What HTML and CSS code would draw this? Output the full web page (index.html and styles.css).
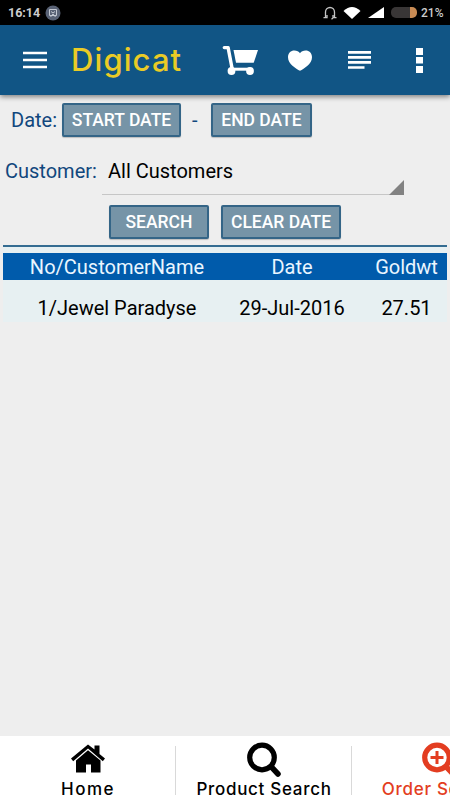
FILE: index.html
```html
<!DOCTYPE html>
<html lang="en">
<head>
  <meta charset="UTF-8" />
  <meta name="viewport" content="width=device-width, initial-scale=1.0" />
  <title>Digicat</title>
  <link rel="stylesheet" href="styles.css">
</head>
<body>
  <div class="status">
    <span class="clock">16:14</span>
    <svg class="badge" width="16" height="16" viewBox="0 0 16 16">
      <circle cx="8" cy="8" r="7.5" fill="#596275"/>
      <path d="M4.5 4.5h7v6h-7zM5.5 12l2.5-3 2.5 3M6 6.5l2 1.5 2-1.5" fill="none" stroke="#c3c8d2"/>
    </svg>
    <svg class="headset" width="14" height="14" viewBox="0 0 14 14">
      <path d="M2.5 11.500V6a4.500 4.500 0 0 1 9 0v5.500M.5 11.700h3.500V9M13.500 11.700H10V9M10 12l-1.500 1.200" fill="none" stroke="#c4c4c4" stroke-width="1.300"/>
    </svg>
    <svg class="wifi" width="18" height="12" viewBox="0 0 18 12"><path d="M.5 4Q9-4 17.500 4L9 12z" fill="#fff"/></svg>
    <svg class="signal" width="16" height="11" viewBox="0 0 16 11"><path d="M16 0v11H0z" fill="#fff"/></svg>
    <span class="battery"></span>
    <span class="percent">21%</span>
  </div>

  <header class="toolbar">
    <svg class="menu" width="24" height="18" viewBox="0 0 24 18"><path d="M0 2h24M0 9h24M0 16h24" stroke="#fff" stroke-width="2.600"/></svg>
    <h1>Digicat</h1>
    <svg class="cart" width="36" height="30" viewBox="0 0 36 30">
      <path d="M2.300 2.600h3.800L10.300 24.500" fill="none" stroke="#fff" stroke-width="3.400" stroke-linecap="round" stroke-linejoin="round"/>
      <path d="M9 24.200h19" stroke="#fff" stroke-width="3"/>
      <path d="M11.500 5H36l-4.300 12.800H14z" fill="#fff"/>
      <circle cx="9.500" cy="26" r="3.900" fill="#fff"/><circle cx="28" cy="26" r="3.900" fill="#fff"/>
    </svg>
    <svg class="heart" width="24" height="21" viewBox="0 0 24 21"><path d="M12 20.800C8 18.500 0 14 0 7.200 0 3.200 2.800.5 6.400.5 8.800.5 10.900 1.500 12 3.200 13.100 1.500 15.200.5 17.600.5 21.200.5 24 3.200 24 7.200c0 6.800-8 11.300-12 13.600z" fill="#fff"/></svg>
    <svg class="lines" width="23" height="18" viewBox="0 0 23 18"><path d="M0 1.400h23M0 6.400h23M0 11.400h23M0 16.500h16.500" stroke="#fff" stroke-width="2.600"/></svg>
    <svg class="more" width="7" height="25" viewBox="0 0 7 25"><path d="M0 0h7v7H0zM0 9h7v6.600H0zM0 18h7v7H0z" fill="#fff"/></svg>
  </header>

  <main>
    <div class="row dates">
      <span class="label date-label">Date:</span>
      <button class="start">START DATE</button>
      <span class="dash">-</span>
      <button class="end">END DATE</button>
    </div>
    <div class="row customer">
      <span class="label customer-label">Customer:</span>
      <div class="spinner">
        <span>All Customers</span>
        <svg width="15" height="15" viewBox="0 0 15 15"><path d="M15 0v15H0z" fill="#828282"/></svg>
      </div>
    </div>
    <div class="row actions">
      <button class="search">SEARCH</button>
      <button class="clear">CLEAR DATE</button>
    </div>
    <div class="orders">
      <div class="order head">
        <span>No/CustomerName</span><span>Date</span><span>Goldwt</span>
      </div>
      <div class="order">
        <span>1/Jewel Paradyse</span><span>29-Jul-2016</span><span>27.51</span>
      </div>
    </div>
  </main>

  <nav class="tabs">
    <div class="tab">
      <svg width="34" height="35" viewBox="0 0 34 35">
        <path d="M0 16.500 17 2.500l6.500 5V3.500h5v8.500L34 16.500l-2.200 2.700L17 6.500 2.200 19.200z"/>
        <path d="M5 18.500 17 8.300l12.500 10.200V30.500H20v-8h-5v8H5z"/>
      </svg>
      <span class="home-label">Home</span>
    </div>
    <div class="tab">
      <svg width="36" height="35" viewBox="0 0 36 35">
        <circle cx="16" cy="15.500" r="12.300" fill="none" stroke="#000" stroke-width="5.200"/>
        <path d="m25 24.500 7 7.500" stroke="#000" stroke-width="5.500" stroke-linecap="round"/>
      </svg>
      <span class="product-label">Product Search</span>
    </div>
    <div class="tab current">
      <svg width="36" height="35" viewBox="0 0 36 35">
        <circle cx="15" cy="15.500" r="12.300" fill="none" stroke="#e33d21" stroke-width="5.200"/>
        <path d="M15 9v13M8.500 15.500h13" stroke="#e33d21" stroke-width="3"/>
        <path d="m24 24.500 7 7.500" stroke="#e33d21" stroke-width="5.500" stroke-linecap="round"/>
      </svg>
      <span class="order-label">Order Search</span>
    </div>
  </nav>
</body>
</html>
```

FILE: styles.css
```css
* {
  box-sizing: border-box;
}
body {
  margin: 0;
  height: 800px;
  overflow: hidden;
  display: flex;
  flex-direction: column;
  background: #eee;
  font-family: Roboto, sans-serif;
  font-size: 20px;
}
svg {
  display: block;
  flex: none;
}
.status {
  height: 25px;
  flex: none;
  display: flex;
  align-items: center;
  padding-left: 8px;
  background: #000;
  color: #ccc;
  font-size: 12px;
  font-weight: 700;
}
.clock {
  width: 37px;
  font-size: 12.5px;
}
.headset {
  margin-left: 262px;
}
.wifi {
  margin-left: 6px;
}
.signal {
  margin-left: 7px;
}
.battery {
  width: 26px;
  height: 11px;
  margin-left: 7px;
  border-radius: 5px;
  background: linear-gradient(to right, #393636 75%, #c98b54 75%);
}
.percent {
  margin-left: 4px;
  white-space: nowrap;
  font-weight: 500;
}
.toolbar {
  height: 70px;
  flex: none;
  display: flex;
  align-items: center;
  padding-left: 23px;
  background: #115585;
  box-shadow: 0 2px 5px rgba(0,0,0,0.45);
  z-index: 1;
}
h1 {
  width: 128px;
  margin: -2px 0 0 24px;
  color: #eacb26;
  font-family: Inter, sans-serif;
  font-size: 31px;
  font-weight: 500;
  letter-spacing: 1.1px;
}
.cart {
  margin-left: 23px;
}
.heart {
  margin-left: 30px;
}
.lines {
  margin-left: 36px;
}
.more {
  margin-left: 45px;
}
main {
  flex: 1;
}
.row {
  display: flex;
  align-items: center;
}
.label {
  color: #11477d;
}
button {
  height: 34px;
  padding: 0 0 1px;
  border: 2px solid #346587;
  border-radius: 2px;
  background: #7694a7;
  box-shadow: 0 1px 1px rgba(0,0,0,0.2);
  color: #fff;
  font-family: inherit;
  font-size: 17.5px;
  font-weight: 500;
  white-space: nowrap;
}
.dates {
  padding: 8px 0 0 11px;
}
.date-label {
  width: 51px;
}
.start {
  width: 119px;
}
.dash {
  width: 30px;
  padding-left: 11px;
  color: #11477d;
}
.end {
  width: 101px;
}
.customer {
  height: 58px;
  padding: 10px 0 0 5px;
}
.customer-label {
  width: 97px;
}
.spinner {
  width: 302px;
  height: 48px;
  padding-left: 6px;
  display: flex;
  align-items: center;
  justify-content: space-between;
  border-bottom: 1px solid #c6c6c6;
}
.spinner svg {
  align-self: flex-end;
  margin-bottom: -1px;
}
.actions {
  padding: 10px 0 0 109px;
  gap: 12px;
}
.search {
  width: 100px;
}
.clear {
  width: 120px;
}
.orders {
  margin: 6px 3px 0;
  border-top: 2px solid #346c91;
  padding-top: 6px;
  background: #e7f0f2;
}
.order {
  height: 42px;
  display: grid;
  grid-template-columns: 228px 122px 1fr;
  align-items: center;
  padding-top: 13px;
  text-align: center;
}
.head {
  height: 27px;
  padding-top: 1px;
  background: #005bab;
  color: #eaf6ff;
}
.order span:last-child {
  padding-left: 13px;
}
.tabs {
  height: 64px;
  flex: none;
  display: flex;
  background: #fff;
  font-family: Inter, sans-serif;
  font-size: 17px;
  font-weight: 500;
  letter-spacing: 0.7px;
}
.tab {
  width: 176px;
  flex: none;
  display: flex;
  flex-direction: column;
  align-items: center;
  padding-top: 6px;
  white-space: nowrap;
  background: linear-gradient(#d9d9d9, #d9d9d9) no-repeat right 10px / 1px 49px;
}
.tab span {
  line-height: 24px;
}
.home-label {
  letter-spacing: 1.5px;
}
.current {
  color: #e33d21;
}
```
